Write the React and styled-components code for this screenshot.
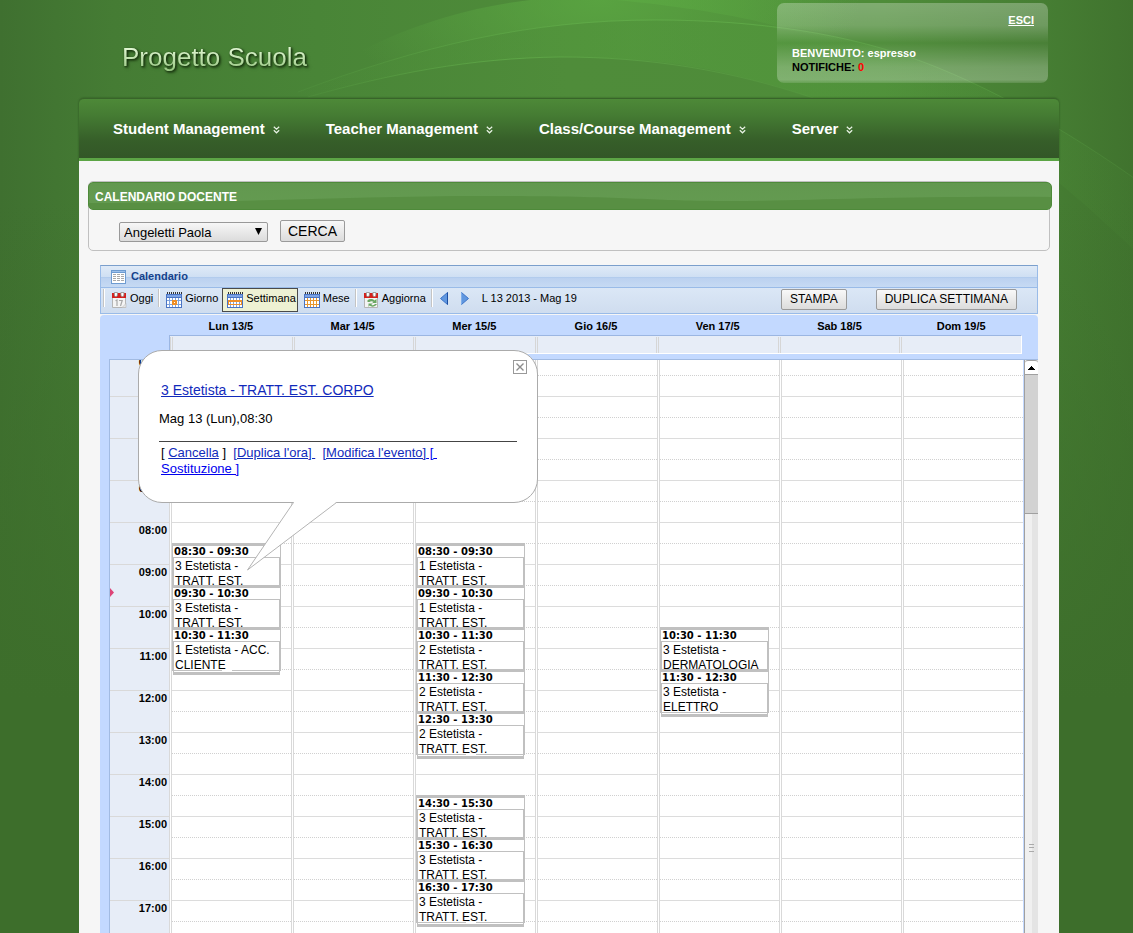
import React from "react";
import styled, { createGlobalStyle } from "styled-components";

const GlobalStyle = createGlobalStyle`
  *, *::before, *::after { box-sizing: border-box; }
  body {
    margin: 0;
    background: #3d6e2b;
    font-family: "Liberation Sans", Arial, sans-serif;
    font-size: 13px;
    color: #000;
  }
  button, select { font-family: inherit; color: inherit; }
`;

const Screen = styled.div`
  position: relative;
  height: 100vh;
  min-height: 600px;
  overflow: hidden;
  padding-left: 5px;
  display: flex;
  background:
    linear-gradient(to bottom, rgba(61, 110, 43, 0) 200px, #3d6e2b 700px),
    linear-gradient(to right, #3f7030 0%, #457c34 10%, #498537 28%, #4f8c3a 50%, #4e8c39 78%, #467e33 92%, #40732e 100%);
`;

const Waves = styled.svg`
  position: absolute;
  top: 0;
  left: 50%;
  width: 1134px;
  height: 260px;
  margin-left: -567px;
`;

const Page = styled.div`
  position: relative;
  width: 100%;
  max-width: 980px;
  margin: 0 auto;
  display: flex;
  flex-direction: column;
`;

const Header = styled.header`
  height: 98px;
  flex: none;
  display: flex;
  justify-content: space-between;
  align-items: flex-start;
  padding: 3px 11px 0 41px;
`;

const Logo = styled.h1`
  margin: 0;
  padding: 39px 2px 4px;
  font-size: 26px;
  line-height: 30px;
  font-weight: normal;
  color: transparent;
  background: linear-gradient(#e2f7d4 45px, #9ccb86 66px);
  background-clip: text;
  -webkit-background-clip: text;
  filter: drop-shadow(1px 1px 1px rgba(15, 40, 8, 0.9)) drop-shadow(1px 1px 1px rgba(15, 40, 8, 0.5));
`;

const UserBox = styled.section`
  width: 271px;
  height: 80px;
  padding: 10px 14px 0 15px;
  border-radius: 7px;
  display: flex;
  flex-direction: column;
  font-size: 11px;
  line-height: 14px;
  font-weight: bold;
  background: linear-gradient(
    rgba(255, 255, 255, 0.28) 0%,
    rgba(255, 255, 255, 0.22) 28%,
    rgba(255, 255, 255, 0.02) 50%,
    rgba(255, 255, 255, 0.24) 80%,
    rgba(255, 255, 255, 0.27) 96%,
    rgba(255, 255, 255, 0.12) 100%
  );
`;

const Logout = styled.a`
  align-self: flex-end;
  margin-bottom: 19px;
  color: #fff;
`;

const Welcome = styled.span`
  color: #fff;
`;

const Count = styled.span`
  color: #f00;
`;

const Nav = styled.nav`
  height: 63px;
  flex: none;
  display: flex;
  align-items: center;
  gap: 46px;
  padding: 0 34px 0;
  border-top: 1px solid #38642a;
  border-bottom: 3px solid #5ca545;
  border-radius: 5px 5px 0 0;
  background: linear-gradient(#4d8938 0, #457c33 16px, #365e29 42px, #335727 100%);
  box-shadow: 0 0 2px rgba(20, 50, 10, 0.6);
`;

const NavItem = styled.a`
  display: flex;
  align-items: center;
  gap: 8px;
  color: #fff;
  font-size: 15px;
  line-height: 18px;
  font-weight: bold;
  text-decoration: none;
  svg { margin-top: 3px; }
`;

const Main = styled.main`
  flex: 1;
  min-height: 0;
  display: flex;
  flex-direction: column;
  background: #f6f6f6;
  padding: 20px 9px 0;
`;

const SearchBox = styled.section`
  flex: none;
  height: 70px;
  margin-bottom: 14px;
  border: 1px solid #c0c0c0;
  border-radius: 5px;
`;

const SearchTitle = styled.h2`
  position: relative;
  overflow: hidden;
  margin: 0 -3px 0 -1px;
  height: 28px;
  padding-left: 6px;
  border: 1px solid #4e8a3a;
  border-radius: 5px;
  color: #fff;
  font-size: 12px;
  line-height: 28px;
  text-transform: uppercase;
  background: linear-gradient(#62984f, #649b51);
  svg {
    position: absolute;
    inset: 0;
    width: 100%;
    height: 100%;
  }
  span { position: relative; }
`;

const SearchForm = styled.form`
  display: flex;
  align-items: flex-end;
  gap: 12px;
  padding: 10px 30px 0;
`;

const SelectWrap = styled.div`
  position: relative;
  width: 149px;
  svg {
    position: absolute;
    right: 6px;
    top: 6px;
    pointer-events: none;
  }
`;

const Select = styled.select`
  appearance: none;
  display: block;
  width: 100%;
  height: 20px;
  padding: 0 4px;
  border: 1px solid #999;
  border-radius: 2px;
  font-size: 13px;
  background: linear-gradient(#f7f7f7, #dcdcdc);
`;

const Button = styled.button`
  height: ${(p) => (p.$small ? 21 : 22)}px;
  padding: 0 7px;
  border: 1px solid #9a9a9a;
  border-radius: 2px;
  font-size: ${(p) => (p.$small ? 12 : 14)}px;
  line-height: 19px;
  background: linear-gradient(#f8f8f8, #dcdcdc);
`;

const Calendar = styled.section`
  flex: 1;
  min-height: 0;
  display: flex;
  flex-direction: column;
  margin: 0 12px;
`;

const PanelTitle = styled.h3`
  flex: none;
  margin: 0;
  height: 22px;
  display: flex;
  align-items: flex-start;
  gap: 5px;
  padding: 4px 0 0 10px;
  border: 1px solid #99bbe8;
  border-top-color: #7b9fcc;
  border-bottom: 0;
  color: #15428b;
  font-size: 11px;
  line-height: 13px;
  background: linear-gradient(#dfeaf7 0, #cfdff3 11px, #a9c6ea 11px, #bbd1f0 12px, #c6daf3 21px);
`;

const Toolbar = styled.div`
  flex: none;
  height: 27px;
  margin-bottom: 1px;
  display: flex;
  align-items: flex-start;
  border: 1px solid #99bbe8;
  background: linear-gradient(#dbe7f6, #cfddef);
  padding-left: 2px;
  font-size: 11px;
`;

const Separator = styled.span`
  width: 2px;
  height: 18px;
  margin-top: 1px;
  border-left: 1px solid #c4c4c4;
  border-right: 1px solid #fff;
`;

const ToolButton = styled.button`
  display: flex;
  align-items: flex-start;
  gap: 3px;
  height: 24px;
  padding: 3px ${(p) => p.$padRight || 3}px 0 ${(p) => p.$padLeft || 4}px;
  border: 1px solid ${(p) => (p.$active ? "#4a4a4a" : "transparent")};
  background: ${(p) => (p.$active ? "#eef1d3" : "transparent")};
  font-size: 11px;
  line-height: 13px;
  svg { flex: none; }
`;

const Range = styled.span`
  margin-left: 8px;
  line-height: 21px;
`;

const ToolbarActions = styled.div`
  margin-left: auto;
  display: flex;
  gap: 29px;
  padding: 1px 20px 0 0;
  ${Button} { padding: 0 8px; }
`;

const Board = styled.div`
  position: relative;
  flex: 1;
  min-height: 0;
  display: flex;
  flex-direction: column;
  border-radius: 4px 4px 0 0;
  background: #c3d9ff;
  padding-left: 9px;
`;

const DayNames = styled.div`
  flex: none;
  height: 20px;
  display: flex;
  padding: 0 16px 0 61px;
`;

const DayName = styled.div`
  flex: 1;
  text-align: center;
  font-size: 11px;
  line-height: 22px;
  font-weight: bold;
`;

const AllDay = styled.div`
  flex: none;
  height: 19px;
  margin: 0 16px 5px 60px;
  display: flex;
  border: 1px solid #fff;
  border-top-color: #9bb6e2;
  border-left-color: #9bb6e2;
  background: #e7edf7;
`;

const AllDayCell = styled.div`
  flex: 1;
  margin-top: 1px;
  border-left: 3px double #d6d6d6;
`;

const GridFrame = styled.div`
  flex: 1;
  min-height: 0;
  display: flex;
  border-top: 1px solid #a2bbe2;
`;

const GridView = styled.div`
  flex: 1;
  overflow: hidden;
  border-left: 1px solid #a2bbe2;
  border-right: 1px solid #c3d9ff;
  background: #fff;
`;

const GridContent = styled.div`
  display: flex;
  margin-top: -6px;
`;

const Hours = styled.div`
  position: relative;
  width: 59px;
  flex: none;
  background: #e7edf7;
`;

const Hour = styled.div`
  height: 42px;
  padding-right: 2px;
  border-top: 1px solid #d9d9d9;
  text-align: right;
  font-size: 11px;
  line-height: 14px;
  font-weight: bold;
`;

const NowMark = styled.svg`
  position: absolute;
  left: 0;
  top: 234px;
`;

const Day = styled.div`
  position: relative;
  flex: 1;
  border-left: 3px double #d9d9d9;
`;

const Slot = styled.div`
  height: 42px;
  border-top: 1px solid #dcdcdc;
  &::before {
    content: "";
    display: block;
    height: 21px;
    border-bottom: 1px dotted #d0d0d0;
  }
`;

const EventBox = styled.article`
  position: absolute;
  left: 0;
  width: 109px;
  border-top: 3px solid #c0c0c0;
`;

const EventTime = styled.div`
  height: 11px;
  padding-left: 1px;
  border: solid #c0c0c0;
  border-width: 0 1px;
  background: #fff;
  font: bold 10px/11px "DejaVu Sans", Verdana, sans-serif;
`;

const EventText = styled.div`
  position: relative;
  height: 30px;
  overflow: hidden;
  padding: 1px 0 0 1px;
  border: solid #c0c0c0;
  border-width: 1px 2px;
  background: #fff;
  font-size: 12px;
  line-height: 15px;
`;

const EventFoot = styled.div`
  position: relative;
  height: 4px;
  margin: 0 1px;
  border: 1px solid #c0c0c0;
  border-top: 0;
  border-bottom-width: 3px;
  background: #fff;
  &::before {
    content: "";
    position: absolute;
    left: 48px;
    top: -1px;
    width: 10px;
    height: 1px;
    background: #fff;
  }
`;

const ScrollBar = styled.div`
  width: 14px;
  display: flex;
  flex-direction: column;
  border-left: 1px solid #a0a0a0;
  background: linear-gradient(to right, #f0f0f0 7px, #e4e4e4 7px);
`;

const ScrollUp = styled.button`
  height: 15px;
  padding: 0;
  border: 0;
  border-top: 1px solid #a0a0a0;
  border-bottom: 1px solid #a0a0a0;
  border-radius: 3px 3px 0 0;
  background: #fff;
  display: flex;
  align-items: center;
  justify-content: center;
`;

const ScrollThumb = styled.div`
  height: 139px;
  border-bottom: 1px solid #a0a0a0;
  background: #d2d2d2;
`;

const ScrollGrip = styled.div`
  width: 5px;
  height: 8px;
  margin: 330px auto 0;
  border: solid #aaa;
  border-width: 1px 0;
  background: linear-gradient(transparent 2px, #aaa 2px, #aaa 3px, transparent 3px);
`;

const Popup = styled.aside`
  position: absolute;
  left: 38px;
  top: 35px;
  width: 400px;
  height: 153px;
  padding: 30px 20px 0;
  border: 1px solid #ababab;
  border-radius: 24px;
  background: #fff;
`;

const PopupClose = styled.button`
  position: absolute;
  right: 10px;
  top: 9px;
  width: 14px;
  height: 14px;
  padding: 0;
  border: 1px solid #999;
  background: #fff;
  display: flex;
  align-items: center;
  justify-content: center;
`;

const PopupTail = styled.svg`
  position: absolute;
  left: 107px;
  top: 150px;
`;

const PopupTitle = styled.a`
  display: block;
  padding-left: 2px;
  color: #112abb;
  font-size: 14px;
  line-height: 18px;
`;

const PopupDate = styled.p`
  margin: 12px 0 0;
  padding-bottom: 14px;
  border-bottom: 1px solid #444;
  line-height: 16px;
`;

const PopupActions = styled.p`
  margin: 3px 60px 0 2px;
  line-height: 16px;
  white-space: pre-wrap;
`;

const Action = styled.a`
  color: ${(p) => (p.$strong ? "#0000ee" : "#112abb")};
`;

function Chevrons() {
  return (
    <svg width="7" height="8" viewBox="0 0 7 8" fill="none" stroke="#e8f2e4" strokeWidth="1.2">
      <path d="M.8.7 3.5 3.2 6.2.7M.8 4.2l2.7 2.6 2.7-2.6" />
    </svg>
  );
}

function TableIcon() {
  return (
    <svg width="15" height="14" viewBox="0 0 15 14" shapeRendering="crispEdges">
      <path fill="#6d9bd1" d="M0 0h15v14H0z" />
      <path fill="#fff" d="M1 3h13v10H1z" />
      <path fill="#9dc0ea" d="M1 1h13v1H1z" />
      <path fill="#a9a9a9" d="M2 4h3v1H2zM6 4h3v1H6zM10 4h3v1h-3zM2 6h3v1H2zM6 6h3v1H6zM10 6h3v1h-3zM2 8h3v1H2zM6 8h3v1H6zM10 8h3v1h-3zM2 10h3v1H2zM6 10h3v1H6zM10 10h3v1h-3z" />
    </svg>
  );
}

function GridIcon({ mode }) {
  const line = mode === "month" ? "#e8962e" : "#7fa3de";
  return (
    <svg width="16" height="16" viewBox="0 0 16 16" shapeRendering="crispEdges">
      <path fill="#4a74c4" d="M0 2h16v14H0z" />
      <path fill="#7da4e6" d="M1 3h14v2H1z" />
      <path fill="#333" d="M1 0h1v2H1zM3 0h1v2H3zM5 0h1v2H5zM7 0h1v2H7zM9 0h1v2H9zM11 0h1v2h-1zM13 0h1v2h-1zM15 0h1v2h-1z" />
      <path fill="#fff" d="M1 6h14v9H1z" />
      <path fill={line} d="M3 6h1v9H3zM6 6h1v9H6zM9 6h1v9H9zM12 6h1v9h-1zM1 8h14v1H1zM1 12h14v1H1z" />
      {mode === "day" && <path fill="#ef8f28" fillRule="evenodd" d="M6 8h5v5H6zM8 10h1v1H8z" />}
      {mode === "week" && <path fill="#ef8f28" fillRule="evenodd" d="M1 8h14v5H1zM2 10h12v2H2z" />}
    </svg>
  );
}

function DateIcon({ refresh }) {
  return (
    <svg width="15" height="16" viewBox="0 0 15 16">
      <path fill="#f4f4f4" stroke="#b5b5b5" d="M.5 4.5h13v11H.5z" />
      <path fill="#d5201c" d="M0 1h14v5H0z" />
      <path fill="#fff" stroke="#8d8d8d" strokeWidth=".8" d="M2.400.5h3v2.600a1.500 1.500 0 0 1-3 0zM8.900.5h3v2.600a1.500 1.500 0 0 1-3 0z" />
      {refresh ? (
        <g fill="#6aa763">
          <path d="M3.500 10V8.200c2-1.600 5-1.600 7 .200L12.500 7v4H8.200l1.300-1.300C8 8.800 6.500 9 5.500 10z" />
          <path d="M13 12c-2 3.200-5.500 3.400-7.500 1.600L4.500 15v-3.500h4.300l-1.500 1.200c1.200 1 2.500.6 3.700-.7z" />
        </g>
      ) : (
        <g>
          <path d="M3.500 8.800 5 8v6M7 8.500h3.200L8.500 14" fill="none" stroke="#a9a9a9" strokeWidth="1.200" />
          <path fill="#e6e6e6" stroke="#bbb" strokeWidth=".6" d="M10 15.500 14 11.500v4z" />
        </g>
      )}
    </svg>
  );
}

function ArrowIcon({ next }) {
  return (
    <svg width="8" height="13" viewBox="0 0 8 13">
      <path
        d={next ? "M.5.500 7.500 6.500.500 12.500z" : "M7.500.500.500 6.500l7 6z"}
        fill="#5f97e0"
        stroke="#3d74c8"
      />
      <path d={next ? "M.5 12.500V.5" : "M7.500.500v12"} stroke={next ? "#7faeea" : "#1c4da0"} />
    </svg>
  );
}

const DAYS = ["Lun 13/5", "Mar 14/5", "Mer 15/5", "Gio 16/5", "Ven 17/5", "Sab 18/5", "Dom 19/5"];
const FIRST_HOUR = 4;
const HOURS = Array.from({ length: 24 - FIRST_HOUR }, (_, i) => i + FIRST_HOUR);
const HOUR_HEIGHT = 42;

const EVENTS = {
  0: [
    [8.5, "3 Estetista - TRATT. EST."],
    [9.5, "3 Estetista - TRATT. EST."],
    [10.5, "1 Estetista - ACC. CLIENTE"],
  ],
  2: [
    [8.5, "1 Estetista - TRATT. EST."],
    [9.5, "1 Estetista - TRATT. EST."],
    [10.5, "2 Estetista - TRATT. EST."],
    [11.5, "2 Estetista - TRATT. EST."],
    [12.5, "2 Estetista - TRATT. EST."],
    [14.5, "3 Estetista - TRATT. EST."],
    [15.5, "3 Estetista - TRATT. EST."],
    [16.5, "3 Estetista - TRATT. EST."],
  ],
  4: [
    [10.5, "3 Estetista - DERMATOLOGIA"],
    [11.5, "3 Estetista - ELETTRO"],
  ],
};

const clock = (t) => `${String(Math.floor(t)).padStart(2, "0")}:${t % 1 ? "30" : "00"}`;

function CalendarEvent({ start, text }) {
  return (
    <EventBox style={{ top: (start - FIRST_HOUR) * HOUR_HEIGHT }}>
      <EventTime>{`${clock(start)} - ${clock(start + 1)}`}</EventTime>
      <EventText>{text}</EventText>
      <EventFoot />
    </EventBox>
  );
}

function EventPopup() {
  return (
    <Popup>
      <PopupTail width="94" height="72" viewBox="0 0 94 72">
        <path fill="#fff" d="M47.500 0 48 1 1.500 69 90.500 1V0z" />
        <path fill="none" stroke="#b4b4b4" d="M47.500 1.500 1.500 69 90.500 1.500" />
      </PopupTail>
      <PopupClose aria-label="Chiudi">
        <svg width="10" height="10" viewBox="0 0 10 10" stroke="#8c8c8c" strokeWidth="1.4">
          <path d="m1.500 1.500 7 7M8.500 1.500l-7 7" />
        </svg>
      </PopupClose>
      <PopupTitle href="#evento">3 Estetista - TRATT. EST. CORPO</PopupTitle>
      <PopupDate>Mag 13 (Lun),08:30</PopupDate>
      <PopupActions>
        {"[ "}
        <Action href="#cancella">Cancella</Action>
        {" ]  "}
        <Action href="#duplica">{"[Duplica l'ora] "}</Action>
        {"  "}
        <Action href="#modifica">{"[Modifica l'evento]"}</Action>
        <Action href="#sostituzione" $strong>{" [ Sostituzione ]"}</Action>
      </PopupActions>
    </Popup>
  );
}

export default function App() {
  return (
    <Screen>
      <GlobalStyle />
      <Waves viewBox="0 0 1134 260" fill="none">
        <defs>
          <linearGradient id="glow" x1="0" x2="1" y1="0" y2="0">
            <stop offset="0" stopColor="#58a640" stopOpacity="0" />
            <stop offset=".4" stopColor="#58a640" stopOpacity=".4" />
            <stop offset="1" stopColor="#58a640" stopOpacity=".05" />
          </linearGradient>
          <radialGradient id="top" gradientUnits="userSpaceOnUse" cx="600" cy="0" r="260" gradientTransform="matrix(1 0 0 .5 0 0)">
            <stop offset="0" stopColor="#5caa43" stopOpacity=".75" />
            <stop offset="1" stopColor="#5caa43" stopOpacity="0" />
          </radialGradient>
          <linearGradient id="edge" x1="0" x2="1" y1="0" y2="0">
            <stop offset="0" stopColor="#6bbb52" stopOpacity=".1" />
            <stop offset=".4" stopColor="#6bbb52" stopOpacity=".5" />
            <stop offset="1" stopColor="#6bbb52" stopOpacity=".15" />
          </linearGradient>
        </defs>
        <path fill="url(#top)" d="M298 92C350 50 430 12 530 0H900V60C820 30 740 20 655 20C530 20 420 46 298 92z" />
        <path fill="url(#top)" d="M616 0C680 6 740 16 776 26C840 32 880 44 926 62L940 0z" />
        <path fill="url(#glow)" d="M298 92C420 46 530 20 655 20C760 20 850 34 926 63C970 80 1040 112 1134 178V250C1060 180 1000 130 926 98H813C720 66 650 57 560 57C470 58 390 74 308 97z" />
        <path stroke="url(#edge)" d="M298 92C420 46 530 20 655 20C760 20 850 34 926 63C970 80 1040 112 1134 178" />
        <path stroke="url(#edge)" d="M308 97C390 74 470 58 560 57C650 57 730 70 813 98" />
      </Waves>
      <Page>
        <Header>
          <Logo>Progetto Scuola</Logo>
          <UserBox>
            <Logout href="#esci">ESCI</Logout>
            <Welcome>BENVENUTO: espresso</Welcome>
            <span>NOTIFICHE: <Count>0</Count></span>
          </UserBox>
        </Header>
        <Nav>
          {["Student Management", "Teacher Management", "Class/Course Management", "Server"].map((label) => (
            <NavItem key={label} href="#menu">
              {label}
              <Chevrons />
            </NavItem>
          ))}
        </Nav>
        <Main>
          <SearchBox>
            <SearchTitle>
              <svg viewBox="0 0 963 26" preserveAspectRatio="none">
                <path fill="#588f43" d="M0 20C150 20 260 13 400 13S560 18 640 18 800 13 963 14V26H0z" />
              </svg>
              <span>Calendario docente</span>
            </SearchTitle>
            <SearchForm>
              <SelectWrap>
                <Select aria-label="Docente">
                  <option>Angeletti Paola</option>
                </Select>
                <svg width="7" height="7" viewBox="0 0 7 7">
                  <path d="M0 0h7L3.500 7z" />
                </svg>
              </SelectWrap>
              <Button type="button">CERCA</Button>
            </SearchForm>
          </SearchBox>
          <Calendar>
            <PanelTitle>
              <TableIcon />
              Calendario
            </PanelTitle>
            <Toolbar>
              <Separator />
              <ToolButton $padLeft={6} $padRight={4}><DateIcon />Oggi</ToolButton>
              <Separator />
              <ToolButton $padLeft={5}><GridIcon mode="day" />Giorno</ToolButton>
              <ToolButton $active $padRight={1}><GridIcon mode="week" />Settimana</ToolButton>
              <ToolButton $padLeft={5} $padRight={4}><GridIcon mode="month" />Mese</ToolButton>
              <Separator />
              <ToolButton $padLeft={6} $padRight={4}><DateIcon refresh />Aggiorna</ToolButton>
              <Separator />
              <ToolButton $padLeft={6} $padRight={5} aria-label="Precedente"><ArrowIcon /></ToolButton>
              <ToolButton $padLeft={6} $padRight={4} aria-label="Successiva"><ArrowIcon next /></ToolButton>
              <Range>L 13 2013 - Mag 19</Range>
              <ToolbarActions>
                <Button $small>STAMPA</Button>
                <Button $small>DUPLICA SETTIMANA</Button>
              </ToolbarActions>
            </Toolbar>
            <Board>
              <DayNames>
                {DAYS.map((d) => <DayName key={d}>{d}</DayName>)}
              </DayNames>
              <AllDay>
                {DAYS.map((d) => <AllDayCell key={d} />)}
              </AllDay>
              <GridFrame>
                <GridView>
                  <GridContent>
                    <Hours>
                      {HOURS.map((h) => <Hour key={h}>{clock(h)}</Hour>)}
                      <NowMark width="4" height="9" viewBox="0 0 4 9">
                        <path fill="#dd4477" d="M0 0 4 4.500 0 9z" />
                      </NowMark>
                    </Hours>
                    {DAYS.map((d, i) => (
                      <Day key={d}>
                        {HOURS.map((h) => <Slot key={h} />)}
                        {(EVENTS[i] || []).map(([start, text]) => (
                          <CalendarEvent key={start} start={start} text={text} />
                        ))}
                      </Day>
                    ))}
                  </GridContent>
                </GridView>
                <ScrollBar>
                  <ScrollUp aria-label="Scorri in alto">
                    <svg width="7" height="4" viewBox="0 0 7 4" shapeRendering="crispEdges">
                      <path d="M3 0h1v1h1v1h1v1h1v1H0V3h1V2h1V1h1z" />
                    </svg>
                  </ScrollUp>
                  <ScrollThumb />
                  <ScrollGrip />
                </ScrollBar>
              </GridFrame>
              <EventPopup />
            </Board>
          </Calendar>
        </Main>
      </Page>
    </Screen>
  );
}
